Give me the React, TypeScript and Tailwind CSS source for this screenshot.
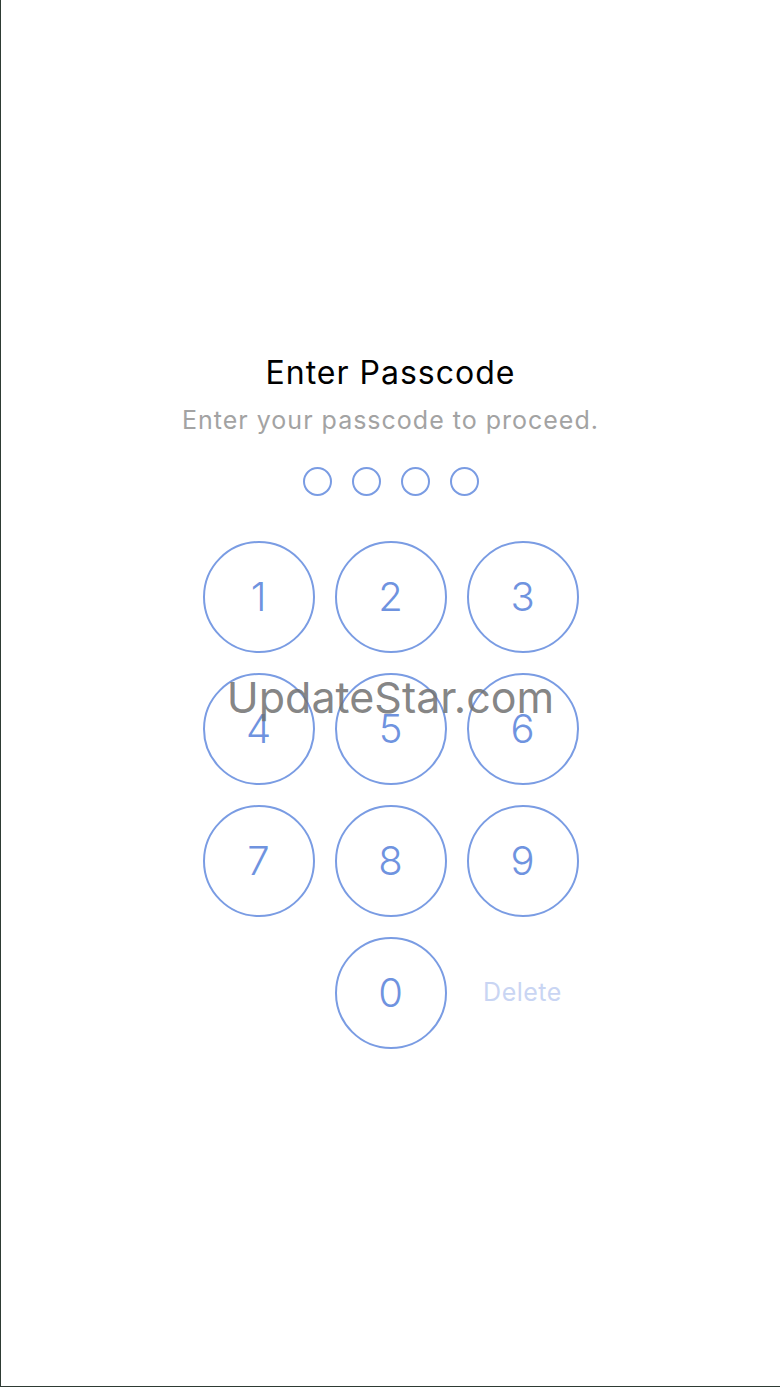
const BLUE = "#6f93df";

const keys = ["1", "2", "3", "4", "5", "6", "7", "8", "9"];

export default function App() {
  return (
    <div
      className="relative h-[1387px] w-full overflow-hidden bg-white border-l border-b border-[#2e3b34]"
      style={{ fontFamily: "Inter, 'Open Sans', sans-serif" }}
    >
      <div className="flex flex-col items-center pt-[355px]">
        <h1 className="text-[32px] leading-[36px] font-normal tracking-[1px] text-black">Enter Passcode</h1>
        <p className="mt-[13px] text-[25px] leading-[32px] tracking-[1px] text-[#a3a3a3]">
          Enter your passcode to proceed.
        </p>

        {/* code dots */}
        <div className="mt-[31px] flex gap-[20px]">
          {[0, 1, 2, 3].map((i) => (
            <div key={i} className="h-[29px] w-[29px] rounded-full border-2 border-[#7a9ce3]" />
          ))}
        </div>

        {/* keypad */}
        <div className="mt-[45px] grid grid-cols-[112px_112px_112px] gap-x-[20px] gap-y-[20px]">
          {keys.map((k) => (
            <button
              key={k}
              className="flex h-[112px] w-[112px] items-center justify-center rounded-full border-2 border-[#7a9ce3] text-[40px] font-light"
              style={{ color: BLUE }}
            >
              {k}
            </button>
          ))}
          <div />
          <button
            className="flex h-[112px] w-[112px] items-center justify-center rounded-full border-2 border-[#7a9ce3] text-[40px] font-light"
            style={{ color: BLUE }}
          >
            0
          </button>
          <div className="flex items-center justify-center text-[25px] tracking-[0.5px] text-[#c9d5f3]">Delete</div>
        </div>
      </div>

      {/* watermark */}
      <div className="absolute left-0 right-0 top-[670px] text-center text-[43px] leading-[54px] text-[#707070]/85">
        UpdateStar.com
      </div>
    </div>
  );
}
